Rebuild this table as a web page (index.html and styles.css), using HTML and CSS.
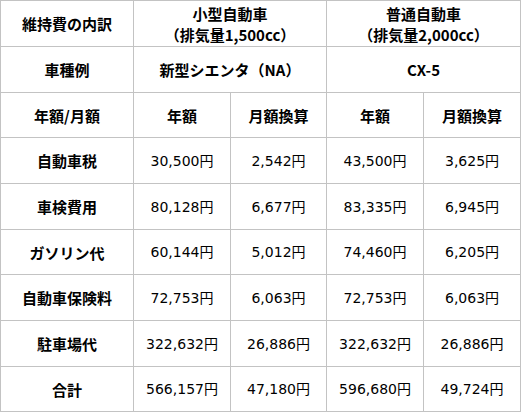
FILE: index.html
```html
<!DOCTYPE html>
<html lang="ja">
<head>
<meta charset="utf-8">
<title>維持費の内訳</title>
<link rel="stylesheet" href="styles.css">
</head>
<body>
<table class="cost">
  <colgroup>
    <col class="c-label">
    <col class="c-a">
    <col class="c-b">
    <col class="c-c">
    <col class="c-d">
  </colgroup>
  <tr class="r-head">
    <th>維持費の内訳</th>
    <th colspan="2">小型自動車<br>（排気量1,500cc）</th>
    <th colspan="2">普通自動車<br>（排気量2,000cc）</th>
  </tr>
  <tr>
    <th>車種例</th>
    <th colspan="2">新型シエンタ（NA）</th>
    <th colspan="2">CX-5</th>
  </tr>
  <tr class="r-short">
    <th>年額/月額</th>
    <th>年額</th>
    <th>月額換算</th>
    <th>年額</th>
    <th>月額換算</th>
  </tr>
  <tr>
    <th>自動車税</th>
    <td>30,500円</td><td>2,542円</td><td>43,500円</td><td>3,625円</td>
  </tr>
  <tr>
    <th>車検費用</th>
    <td>80,128円</td><td>6,677円</td><td>83,335円</td><td>6,945円</td>
  </tr>
  <tr class="r-short">
    <th>ガソリン代</th>
    <td>60,144円</td><td>5,012円</td><td>74,460円</td><td>6,205円</td>
  </tr>
  <tr>
    <th>自動車保険料</th>
    <td>72,753円</td><td>6,063円</td><td>72,753円</td><td>6,063円</td>
  </tr>
  <tr>
    <th>駐車場代</th>
    <td>322,632円</td><td>26,886円</td><td>322,632円</td><td>26,886円</td>
  </tr>
  <tr class="r-short">
    <th>合計</th>
    <td>566,157円</td><td>47,180円</td><td>596,680円</td><td>49,724円</td>
  </tr>
</table>
</body>
</html>
```

FILE: styles.css
```css
html, body {
  margin: 0;
  padding: 0;
  background: #ffffff;
}

.cost {
  border-collapse: separate;
  border-spacing: 1px;
  background: #c3c3c3;
  table-layout: fixed;
  width: 521px;
  color: #000000;
}

.c-label { width: 132px; }
.c-a { width: 96px; }
.c-b { width: 95px; }
.c-c { width: 96px; }
.c-d { width: 96px; }

.cost tr { height: 45px; }
.cost tr.r-short { height: 44px; }

.cost th,
.cost td {
  background: #ffffff;
  padding: 0;
  text-align: center;
  vertical-align: middle;
  overflow: hidden;
  white-space: nowrap;
}

.cost th {
  font-family: "Noto Sans CJK JP", "DejaVu Sans", sans-serif;
  font-weight: 700;
  font-size: 15px;
  line-height: 21px;
}

.cost td {
  font-family: "DejaVu Sans", "Noto Sans CJK JP", sans-serif;
  font-weight: 400;
  font-size: 14px;
  line-height: 20px;
}
```
